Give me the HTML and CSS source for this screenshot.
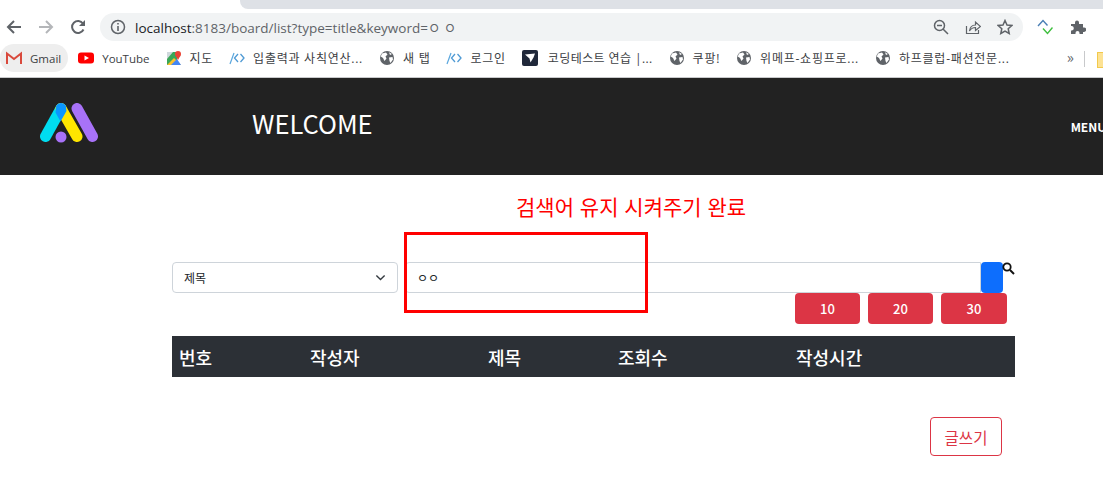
FILE: index.html
```html
<!Doctype html>
<html lang="ko">
<head>
  <meta charset="utf-8">
  <title>board list</title>
  <link rel="stylesheet" href="styles.css">
</head>
<body>
  <svg class="sprites" width="0" height="0">
    <symbol id="globe" viewBox="0 0 16 16">
      <circle cx="8" cy="8" r="7" fill="#5f6368"/>
      <path d="M3 3.500 7 2.500 8.500 4.500 6.500 6.500 7.500 8.500 5.500 11 4 8 1.800 6.500Z M10 7.500 13.500 7 14 9.500 11.500 13 10.500 11Z M10 2.200 13 4 11 5Z" fill="#fff"/>
    </symbol>
    <symbol id="prog" viewBox="0 0 16 16">
      <path d="M1 14 5 3" stroke="#5aa7de" stroke-width="1.200" fill="none"/>
      <path d="M9 4 5.500 8 9 12M11.500 4 15 8 11.500 12" stroke="#4f9ad4" stroke-width="1.300" fill="none"/>
    </symbol>
  </svg>

  <div class="tabstrip"><div class="tabstrip-gray"></div></div>

  <div class="toolbar">
    <svg class="nav-icon" width="16" height="16" viewBox="0 0 16 16"><path d="M15 8H2M8 2 2 8l6 6" stroke="#5f6368" stroke-width="2" fill="none"/></svg>
    <svg class="nav-icon" width="16" height="16" viewBox="0 0 16 16"><path d="M1 8h13M8 2l6 6-6 6" stroke="#b4b6b9" stroke-width="2" fill="none"/></svg>
    <svg class="nav-icon" width="16" height="16" viewBox="0 0 16 16"><path d="M13.500 10.500A6 6 0 1 1 13 4.500" stroke="#5f6368" stroke-width="2" fill="none"/><path d="M15 1v6H9Z" fill="#5f6368"/></svg>
    <div class="omnibox">
      <svg class="info" width="16" height="16" viewBox="0 0 16 16"><circle cx="8" cy="8" r="6.500" stroke="#5f6368" stroke-width="1.500" fill="none"/><path d="M8 7v5M8 4v1.600" stroke="#5f6368" stroke-width="1.600"/></svg>
      <span class="url"><span class="url-host">localhost</span>:8183/board/list?type=title&amp;keyword=ㅇ ㅇ</span>
      <svg class="omni-icon zoom-out" width="16" height="16" viewBox="0 0 16 16"><circle cx="6.500" cy="6.500" r="5" stroke="#5f6368" stroke-width="1.500" fill="none"/><path d="M4 6.500h5M10 10l5 5" stroke="#5f6368" stroke-width="1.500"/></svg>
      <svg class="omni-icon" width="16" height="16" viewBox="0 0 16 16"><path d="M1.500 7v7.500h12V11" stroke="#5f6368" stroke-width="1.200" fill="none"/><path d="M4.500 12C5 8 7.500 6 10.500 6V3l5 4.500-5 4V8.500c-2.500 0-4.500 1-6 3.500Z" stroke="#5f6368" stroke-width="1.200" fill="none"/></svg>
      <svg class="omni-icon" width="16" height="16" viewBox="0 0 16 16"><path d="M8 1.500 10 6l4.800.5-3.600 3.200 1 4.800L8 12l-4.200 2.500 1-4.800L1.200 6.500 6 6Z" stroke="#5f6368" stroke-width="1.500" fill="none"/></svg>
    </div>
    <svg class="ext-icon" width="16" height="16" viewBox="0 0 16 16"><path d="M1 7 6 1.500 10.500 6.500" stroke="#4a7fb5" stroke-width="1.400" fill="none"/><path d="M6 9.500 10.500 14.500 15.500 8.500" stroke="#3fbf3f" stroke-width="1.400" fill="none"/></svg>
    <svg class="ext-icon puzzle" width="16" height="16" viewBox="0 0 16 16"><path d="M1 5h4V3.500a2 2 0 0 1 4 0V5h4v3.500h1a2.200 2.200 0 0 1 0 4.400h-1V15H9.500v-1a2 2 0 0 0-4 0v1H1v-3.500h1a2.300 2.300 0 0 0 0-4.500H1Z" fill="#5f6368"/></svg>
  </div>

  <div class="bookmarks">
    <a class="bm bm-active">
      <svg width="16" height="16" viewBox="0 0 16 16"><path d="M1 14V3.500L8 9l7-5.500V14" stroke="#d9493c" stroke-width="2" fill="none"/></svg>
      <span>Gmail</span>
    </a>
    <a class="bm">
      <svg width="16" height="16" viewBox="0 0 16 16"><rect y="2.500" width="16" height="11" rx="3" fill="#f00"/><path d="M6.500 5.500 11 8l-4.500 2.500Z" fill="#fff"/></svg>
      <span>YouTube</span>
    </a>
    <a class="bm">
      <svg width="16" height="16" viewBox="0 0 16 16"><path d="M1 2h10v13H1Z" fill="#3aa757"/><path d="M1 15 8 8l7 7Z" fill="#fbc02d"/><path d="M1 2h6L1 9Z" fill="#cfd8dc"/><path d="M5 15 11 9l4 6Z" fill="#4285f4"/><circle cx="12" cy="4" r="3" fill="#ea4335"/><path d="M9.500 5.500 12 10l2.500-4.500Z" fill="#ea4335"/></svg>
      <span class="ko">지도</span>
    </a>
    <a class="bm"><svg width="16" height="16"><use href="#prog"/></svg><span class="ko">입출력과 사칙연산...</span></a>
    <a class="bm"><svg width="16" height="16"><use href="#globe"/></svg><span class="ko">새 탭</span></a>
    <a class="bm"><svg width="16" height="16"><use href="#prog"/></svg><span class="ko">로그인</span></a>
    <a class="bm">
      <svg width="16" height="16" viewBox="0 0 16 16"><rect width="16" height="16" rx="2" fill="#20283a"/><path d="M3 4.500 13 3.500 11.500 7.500 8.500 12.500 7.500 8.500Z" fill="#fff"/></svg>
      <span class="ko ko-tight">코딩테스트 연습 |...</span>
    </a>
    <a class="bm"><svg width="16" height="16"><use href="#globe"/></svg><span class="ko">쿠팡!</span></a>
    <a class="bm"><svg width="16" height="16"><use href="#globe"/></svg><span class="ko">위메프-쇼핑프로...</span></a>
    <a class="bm"><svg width="16" height="16"><use href="#globe"/></svg><span class="ko">하프클럽-패션전문...</span></a>
    <span class="bm-more">»</span>
    <span class="bm-sep"></span>
    <span class="bm-folder"></span>
  </div>

  <header class="site-header">
    <svg class="logo" width="59" height="40" viewBox="0 0 59 40">
      <path d="M5.500 33.500 21 5.500" stroke="#00dcf0" stroke-width="11" stroke-linecap="round"/>
      <path d="M21 5.500 37 33.500" stroke="#ffe600" stroke-width="11" stroke-linecap="round"/>
      <path d="M16.200 2.840A5.500 5.500 0 0 1 25.800 2.770L26.500 8 20.500 18.500 15.500 9.500Z" fill="#0a96ff"/>
      <path d="M37 5.500 52.500 33.500" stroke="#a872f8" stroke-width="11" stroke-linecap="round"/>
      <circle cx="21" cy="34" r="5.500" fill="#a872f8"/>
    </svg>
    <h1 class="site-title">WELCOME</h1>
    <span class="menu">MENU</span>
  </header>

  <main class="board">
    <h2 class="note">검색어 유지 시켜주기 완료</h2>

    <form class="search-row">
      <div class="select-box">
        <span>제목</span>
        <svg width="11" height="11" viewBox="0 0 16 16"><path d="M2 5l6 6 6-6" stroke="#343a40" stroke-width="2" fill="none"/></svg>
      </div>
      <input class="keyword" type="text" value="ㅇㅇ">
      <button class="search-btn" type="button">
        <svg class="search-icon" width="13" height="13" viewBox="0 0 13 13"><circle cx="5" cy="5" r="3.700" stroke="#111" stroke-width="1.800" fill="none"/><path d="M8 8l4 4" stroke="#111" stroke-width="2"/></svg>
      </button>
    </form>

    <div class="size-row">
      <button class="size-btn" type="button">10</button>
      <button class="size-btn" type="button">20</button>
      <button class="size-btn" type="button">30</button>
    </div>

    <table class="list">
      <thead>
        <tr>
          <th class="col-no">번호</th>
          <th class="col-writer">작성자</th>
          <th class="col-title">제목</th>
          <th class="col-hit">조회수</th>
          <th>작성시간</th>
        </tr>
      </thead>
    </table>

    <div class="write-row">
      <button class="write-btn" type="button">글쓰기</button>
    </div>

    <div class="highlight"></div>
  </main>
</body>
</html>
```

FILE: styles.css
```css
body{
  margin: 0;
  height: 493px;
  overflow: hidden;
  background: #fff;
  font-family: "Noto Sans CJK KR", "Noto Sans", sans-serif;
}

.sprites{
  display: block;
  height: 0;
}

/* browser chrome */
.tabstrip{
  height: 9px;
  padding-left: 240px;
}
.tabstrip-gray{
  height: 9px;
  background: #dee1e6;
  border-bottom-left-radius: 8px;
}

.toolbar{
  height: 35px;
  display: flex;
  align-items: center;
  padding-left: 6px;
  box-sizing: border-box;
}
.nav-icon{
  margin-right: 16px;
}
.omnibox{
  width: 923px;
  height: 28px;
  margin: 0 6px 0 -2px;
  border-radius: 14px;
  background: #f1f3f4;
  display: flex;
  align-items: center;
  padding: 0 10px;
  box-sizing: border-box;
}
.info{
  margin-right: 9px;
}
.url{
  flex: 1;
  font-family: "Open Sans", "Noto Sans CJK KR", sans-serif;
  font-size: 13.500px;
  color: #5f6368;
  white-space: nowrap;
}
.url-host{
  color: #202124;
}
.omni-icon{
  margin-left: 16px;
}
.ext-icon{
  margin-left: 8px;
}
.puzzle{
  margin-left: 17px;
}

.bookmarks{
  height: 34px;
  box-sizing: border-box;
  border-bottom: 1px solid #c8c9cb;
  display: flex;
  align-items: flex-start;
  padding-bottom: 5px;
}
.bm{
  height: 28px;
  display: flex;
  align-items: center;
  gap: 8px;
  padding: 0 8px;
  border-radius: 14px;
  font-family: "Open Sans", "Noto Sans CJK KR", sans-serif;
  font-size: 11.500px;
  color: #3c4043;
  white-space: nowrap;
}
.ko{
  font-size: 12px;
  letter-spacing: .75px;
}
.ko-tight{
  margin-left: 2px;
  letter-spacing: .4px;
}
.bm-active{
  background: #eeeeee;
  padding: 0 7px 0 6px;
  margin-right: 2px;
}
.bm-more{
  margin: 2px 0 0 auto;
  font-size: 15px;
  line-height: 22px;
  color: #5f6368;
}
.bm-sep{
  width: 1px;
  height: 16px;
  margin: 7px 12px 0 10px;
  background: #c8c9cb;
}
.bm-folder{
  width: 5px;
  height: 14px;
  margin-top: 8px;
  background: #fde293;
  border: 1px solid #f2c94c;
  border-right: 0;
}

/* site */
.site-header{
  height: 97px;
  background: #222;
  display: flex;
  align-items: center;
  overflow: hidden;
  padding-left: 40px;
}
.logo{
  flex: none;
  margin: 0 153px 8px 0;
}
.site-title{
  flex: none;
  margin: 0 698px 8px 0;
  font-size: 25.500px;
  font-weight: 400;
  color: #fff;
}
.menu{
  flex: none;
  font-size: 12px;
  font-weight: 700;
  color: #fff;
}

.board{
  position: relative;
  padding: 16px 0 0 172px;
  width: 843px;
}
.note{
  margin: 0;
  padding-left: 344px;
  height: 71px;
  font-size: 21px;
  line-height: 30px;
  font-weight: 400;
  color: #f00;
  white-space: nowrap;
}

.search-row{
  display: flex;
  width: 831px;
  height: 31px;
  margin: 0;
}
.select-box{
  width: 226px;
  box-sizing: border-box;
  margin-right: 7px;
  padding: 0 11px;
  border: 1px solid #ced4da;
  border-radius: 4px;
  display: flex;
  align-items: center;
  justify-content: space-between;
  font-size: 12px;
  color: #212529;
}
.keyword{
  width: 576px;
  box-sizing: border-box;
  padding: 0 11px;
  border: 1px solid #ced4da;
  border-radius: 4px 0 0 4px;
  font-family: inherit;
  font-size: 12px;
  color: #212529;
  outline: 0;
}
.search-btn{
  position: relative;
  width: 22px;
  padding: 0;
  border: 0;
  border-radius: 4px;
  background: #0d6efd;
}
.search-icon{
  position: absolute;
  top: 0;
  left: 21px;
}

.size-row{
  display: flex;
  justify-content: flex-end;
  gap: 8px;
  padding-right: 8px;
}
.size-btn{
  width: 65px;
  height: 31px;
  padding: 0;
  border: 0;
  border-radius: 4px;
  background: #dc3545;
  color: #fff;
  font-family: inherit;
  font-size: 13px;
  font-weight: 500;
}
.size-btn:last-child{
  width: 66px;
}

.list{
  width: 843px;
  margin-top: 12px;
  border-collapse: collapse;
  table-layout: fixed;
}
.list th{
  height: 41px;
  padding: 0 0 0 7px;
  background: #2c3036;
  color: #fff;
  font-size: 18px;
  font-weight: 500;
  text-align: left;
}
.col-no{ width: 124px; }
.col-writer{ width: 171px; }
.col-title{ width: 123px; }
.col-hit{ width: 171px; }

.write-row{
  display: flex;
  justify-content: flex-end;
  padding: 40px 13px 0 0;
}
.write-btn{
  width: 72px;
  height: 39px;
  padding: 0;
  border: 1px solid #dc3545;
  border-radius: 4px;
  background: #fff;
  color: #dc3545;
  font-family: inherit;
  font-size: 15.500px;
}

/* red annotation drawn over the screenshot */
.highlight{
  position: absolute;
  left: 404px;
  top: 57px;
  width: 238px;
  height: 75px;
  border: 3px solid #f00;
}
```
